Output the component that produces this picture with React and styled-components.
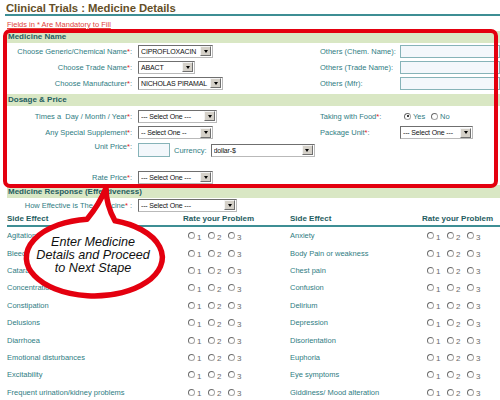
import React from 'react';
import styled, { createGlobalStyle, css } from 'styled-components';

const Global = createGlobalStyle`
  html, body { margin: 0; padding: 0; background: #fff; }
  body { font-family: "Liberation Sans", Arial, sans-serif; }
  * { box-sizing: border-box; }
`;

const Page = styled.div`
  position: relative;
  width: 500px;
  height: 400px;
  overflow: hidden;
  background: #fff;
`;

const Title = styled.h1`
  margin: 0 0 0 5px;
  padding: 2px 0 0 1px;
  height: 16px;
  line-height: 12px;
  font-size: 11.3px;
  letter-spacing: -0.05px;
  font-weight: bold;
  color: #654f28;
  border-bottom: 2px solid #3e8e94;
`;

const Note = styled.div`
  height: 15px;
  padding: 4px 0 0 7px;
  line-height: 9px;
  font-size: 7.5px;
  color: #e0443c;
  text-decoration: underline;
`;

const Band = styled.div`
  margin: ${p => p.$mt || 0}px 0 0 7px;
  height: ${p => p.$h || 12}px;
  line-height: ${p => p.$h || 12}px;
  padding-left: 1px;
  background: #d9e7c4;
  font-size: 8px;
  font-weight: bold;
  color: #1f5d61;
  white-space: nowrap;
`;

const FormGrid = styled.div`
  display: grid;
  grid-template-columns: 133px 187px 80px 100px;
  grid-template-rows: ${p => p.$rows};
  margin-top: ${p => p.$mt || 0}px;
  align-items: center;
`;

const Label = styled.div`
  text-align: right;
  font-size: 7.5px;
  color: #2f7d83;
  white-space: nowrap;
  padding-right: 1px;
  padding-top: ${p => p.$pt || 0}px;
  align-self: ${p => p.$self || 'auto'};
`;

const SideLabel = styled.div`
  font-size: 7.5px;
  color: #2f7d83;
  white-space: nowrap;
`;

const Star = styled.span`
  color: #e02020;
`;

const Cell = styled.div`
  display: flex;
  align-items: center;
  gap: ${p => p.$gap || 0}px;
  padding-left: ${p => (p.$pl === undefined ? 5 : p.$pl)}px;
  padding-top: ${p => p.$pt || 0}px;
  align-self: ${p => p.$self || 'auto'};
  grid-column: ${p => p.$span || 'auto'};
`;

const SelectBox = styled.div`
  display: flex;
  align-items: center;
  width: ${p => p.$w}px;
  height: 13px;
  padding: 0 1px 0 2px;
  border: 1px solid;
  border-color: #6f6f6f #b9b9b9 #b9b9b9 #6f6f6f;
  background: #fff;
  font-size: 7px;
  letter-spacing: -0.15px;
  color: #111;
  flex-shrink: 0;
`;

const SelectText = styled.span`
  flex: 1;
  white-space: nowrap;
  overflow: hidden;
`;

const ArrowBtn = styled.span`
  display: flex;
  align-items: center;
  justify-content: center;
  width: 11px;
  height: 10px;
  background: #d4d0c8;
  border: 1px solid;
  border-color: #f4f4f4 #6f6f6f #6f6f6f #f4f4f4;
  flex-shrink: 0;
  &::after {
    content: '';
    border-left: 2.5px solid transparent;
    border-right: 2.5px solid transparent;
    border-top: 3px solid #000;
  }
`;

const TextInput = styled.div`
  width: ${p => p.$w}px;
  height: ${p => p.$h || 13}px;
  border: 1px solid #86b3b8;
  background: #f3f7fb;
  flex-shrink: 0;
`;

const CurrencyLabel = styled.span`
  font-size: 7.5px;
  color: #2f7d83;
  margin: 0 4px;
  white-space: nowrap;
`;

const RadioCircle = styled.span`
  position: relative;
  display: inline-block;
  width: 7px;
  height: 7px;
  border-radius: 50%;
  border: 1px solid #a6a6a6;
  border-top-color: #6c6c6c;
  border-left-color: #6c6c6c;
  background: #fff;
  flex-shrink: 0;
  ${p => p.$checked && css`
    &::after {
      content: '';
      position: absolute;
      left: 1.5px;
      top: 1.5px;
      width: 2px;
      height: 2px;
      border-radius: 50%;
      background: #000;
    }
  `}
`;

const RadioOpt = styled.span`
  display: inline-flex;
  align-items: center;
  width: ${p => p.$w || 20}px;
  font-size: ${p => p.$fs || 8}px;
  color: ${p => p.$color || '#6a6a6a'};
`;

const RadioText = styled.span`
  margin-left: 2px;
  position: relative;
  top: ${p => p.$dy || 0}px;
`;

const Table = styled.div`
  padding-left: 7px;
`;

const TRow = styled.div`
  display: grid;
  grid-template-columns: 176px 107px 132px 1fr;
  align-items: center;
  height: ${p => p.$h}px;
  ${p => p.$head && css`
    border-bottom: 2px solid #3e8e94;
  `}
`;

const TCell = styled.div`
  white-space: nowrap;
  font-size: ${p => (p.$head ? 8 : 7.5)}px;
  font-weight: ${p => (p.$head ? 'bold' : 'normal')};
  color: ${p => (p.$head ? '#1f5d61' : '#2f7d83')};
`;

const Rating = styled.div`
  display: flex;
  padding-left: 5px;
`;

const Overlay = styled.div`
  position: absolute;
  left: ${p => p.$x}px;
  top: ${p => p.$y}px;
  width: ${p => p.$w}px;
  height: ${p => p.$h}px;
  pointer-events: none;
`;

const RedBox = styled(Overlay)`
  border: 4px solid #e4000f;
  border-radius: 7px;
`;

const BubbleSvg = styled.svg`
  position: absolute;
  left: 0;
  top: 0;
  pointer-events: none;
`;

const BubbleText = styled(Overlay)`
  text-align: center;
  font-style: italic;
  font-size: 12.6px;
  line-height: 12.8px;
  color: #111;
  white-space: nowrap;
`;

const Select = ({ w, children }) => (
  <SelectBox $w={w}>
    <SelectText>{children}</SelectText>
    <ArrowBtn />
  </SelectBox>
);

const Req = ({ children }) => (
  <>
    {children}
    <Star>*</Star>:
  </>
);

const RateGroup = () => (
  <Rating>
    {[1, 2, 3].map(n => (
      <RadioOpt key={n}>
        <RadioCircle />
        <RadioText $dy={1.5}>{n}</RadioText>
      </RadioOpt>
    ))}
  </Rating>
);

const left = [
  'Agitation',
  'Bleeding',
  'Cataract',
  'Concentration',
  'Constipation',
  'Delusions',
  'Diarrhoea',
  'Emotional disturbances',
  'Excitability',
  'Frequent urination/kidney problems',
];
const right = [
  'Anxiety',
  'Body Pain or weakness',
  'Chest pain',
  'Confusion',
  'Delirium',
  'Depression',
  'Disorientation',
  'Euphoria',
  'Eye symptoms',
  'Giddiness/ Mood alteration',
];

export default function App() {
  return (
    <Page>
      <Global />
      <Title>Clinical Trials : Medicine Details</Title>
      <Note>Fields in * Are Mandatory to Fill</Note>

      <Band>Medicine Name</Band>
      <FormGrid $rows="16px 16px 16px">
        <Label><Req>Choose Generic/Chemical Name</Req></Label>
        <Cell><Select w={75}>CIPROFLOXACIN</Select></Cell>
        <SideLabel>Others (Chem. Name):</SideLabel>
        <Cell $pl={0}><TextInput $w={100} /></Cell>

        <Label><Req>Choose Trade Name</Req></Label>
        <Cell><Select w={57}>ABACT</Select></Cell>
        <SideLabel>Others (Trade Name):</SideLabel>
        <Cell $pl={0}><TextInput $w={100} /></Cell>

        <Label><Req>Choose Manufacturer</Req></Label>
        <Cell><Select w={85}>NICHOLAS PIRAMAL</Select></Cell>
        <SideLabel>Others (Mfr):</SideLabel>
        <Cell $pl={0}><TextInput $w={100} /></Cell>
      </FormGrid>

      <Band $mt={3}>Dosage &amp; Price</Band>
      <FormGrid $rows="16px 17px 28px 16px" $mt={2}>
        <Label><Req>Times a &nbsp;Day / Month / Year</Req></Label>
        <Cell><Select w={79}>--- Select One ---</Select></Cell>
        <SideLabel><Req>Taking with Food</Req></SideLabel>
        <Cell $pl={4}>
          <RadioOpt $w={27} $fs={7.5} $color="#2f7d83">
            <RadioCircle $checked />
            <RadioText>Yes</RadioText>
          </RadioOpt>
          <RadioOpt $w={20} $fs={7.5} $color="#2f7d83">
            <RadioCircle />
            <RadioText>No</RadioText>
          </RadioOpt>
        </Cell>

        <Label><Req>Any Special Supplement</Req></Label>
        <Cell><Select w={75}>-- Select One --</Select></Cell>
        <SideLabel><Req>Package Unit</Req></SideLabel>
        <Cell $pl={0}><Select w={73}>--- Select One ---</Select></Cell>

        <Label $pt={1} $self="start"><Req>Unit Price</Req></Label>
        <Cell $self="start" $pt={2} $span="2 / span 3">
          <TextInput $w={32} $h={14} />
          <CurrencyLabel>Currency:</CurrencyLabel>
          <Select w={104}>dollar-$</Select>
        </Cell>

        <Label><Req>Rate Price</Req></Label>
        <Cell><Select w={75}>--- Select One ---</Select></Cell>
        <div />
        <div />
      </FormGrid>

      <Band $h={13}>Medicine Response (Effectiveness)</Band>
      <FormGrid $rows="14px">
        <Label>How Effective is The Medicine<Star>*</Star> :</Label>
        <Cell><Select w={99}>--- Select One ---</Select></Cell>
        <div />
        <div />
      </FormGrid>

      <Table>
        <TRow $head $h={15}>
          <TCell $head>Side Effect</TCell>
          <TCell $head>Rate your Problem</TCell>
          <TCell $head>Side Effect</TCell>
          <TCell $head>Rate your Problem</TCell>
        </TRow>
        {left.map((l, i) => (
          <TRow key={l} $h={17.4}>
            <TCell>{l}</TCell>
            <RateGroup />
            <TCell>{right[i]}</TCell>
            <RateGroup />
          </TRow>
        ))}
      </Table>

      <RedBox $x={3} $y={29} $w={495} $h={159} />

      <BubbleSvg width="500" height="400" viewBox="0 0 500 400">
        <path
          d="M 87 219.2 A 68 38.5 0 1 0 115 220.8 Q 106 205 106 188 Q 99 205 87 219.2 Z"
          fill="#fff"
          stroke="#e4000f"
          strokeWidth="5.5"
          strokeLinejoin="round"
        />
      </BubbleSvg>
      <BubbleText $x={22} $y={236} $w={142} $h={40}>
        Enter Medicine
        <br />
        Details and Proceed
        <br />
        to Next Stape
      </BubbleText>
    </Page>
  );
}
